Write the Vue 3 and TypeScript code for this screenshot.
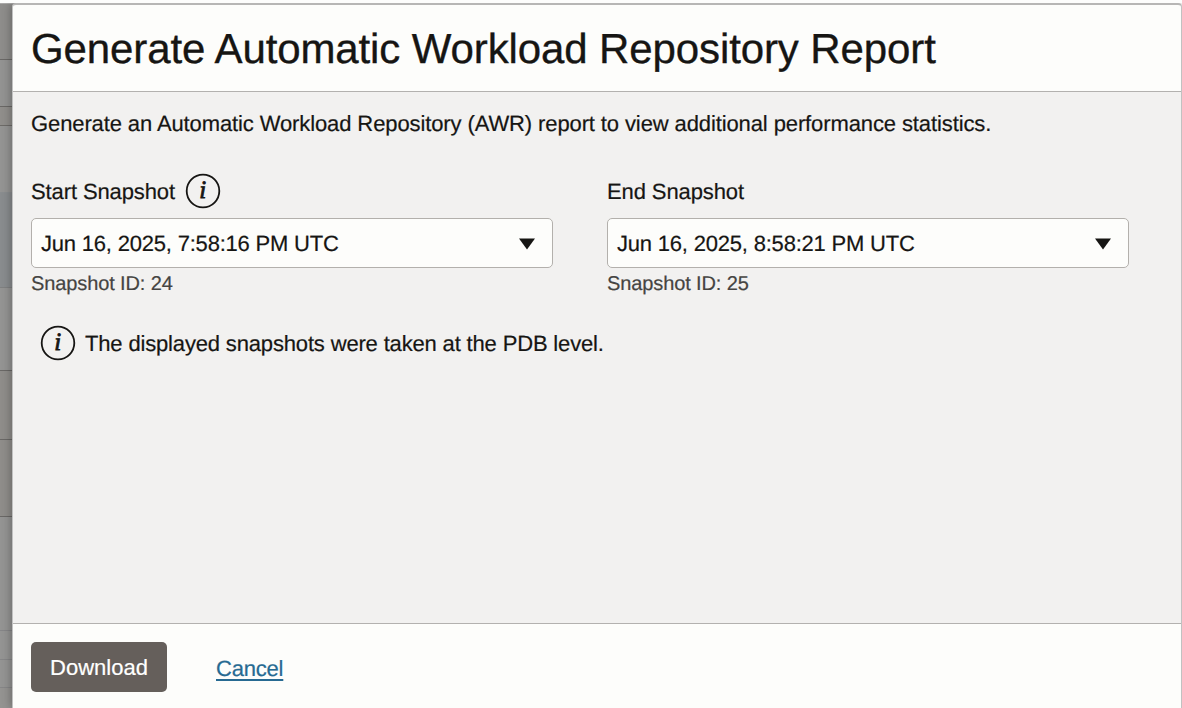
<script setup lang="ts">
interface Snapshot {
  label: string
  value: string
  id: number
  help: boolean
}

interface Band {
  height: number
  color: string
  line: string
}

const snapshots: Snapshot[] = [
  { label: 'Start Snapshot', value: 'Jun 16, 2025, 7:58:16 PM UTC', id: 24, help: true },
  { label: 'End Snapshot', value: 'Jun 16, 2025, 8:58:21 PM UTC', id: 25, help: false },
]

const bands: Band[] = [
  { height: 56, color: '#8e8d8b', line: '#6a6866' },
  { height: 47, color: '#939392', line: '#6a6866' },
  { height: 19, color: '#908e8b', line: '#6d6b68' },
  { height: 67, color: '#949493', line: '#8a8d8f' },
  { height: 95, color: '#898c8e', line: '#7f8081' },
  { height: 83, color: '#949493', line: '#6a6866' },
  { height: 69, color: '#8f8d8a', line: '#6a6866' },
  { height: 77, color: '#8f8d8a', line: '#6a6866' },
  { height: 114, color: '#949493', line: '#858587' },
  { height: 29, color: '#949493', line: '#868687' },
  { height: 28, color: '#949493', line: '#868687' },
  { height: 22, color: '#949391', line: '#949391' },
]
</script>

<template>
  <div class="page">
    <div class="viewport">
      <div class="backdrop">
        <div
          v-for="(band, i) in bands"
          :key="i"
          class="band"
          :style="{ height: band.height + 'px', backgroundColor: band.color, borderBottomColor: band.line }"
        ></div>
      </div>
      <section class="dialog" role="dialog">
        <header class="head">
          <h1>Generate Automatic Workload Repository Report</h1>
        </header>
        <main class="body">
          <p class="intro">Generate an Automatic Workload Repository (AWR) report to view additional performance statistics.</p>
          <div class="fields">
            <div v-for="snap in snapshots" :key="snap.id" class="field">
              <div class="label">
                <span>{{ snap.label }}</span>
                <svg v-if="snap.help" class="info" width="36" height="36" viewBox="0 0 36 36">
                  <circle cx="18" cy="18" r="16.3" />
                  <text x="17.8" y="25" text-anchor="middle">i</text>
                </svg>
              </div>
              <div class="select">
                <span class="value">{{ snap.value }}</span>
                <svg width="16" height="12" viewBox="0 0 16 12"><path d="M0 .5h16L8 11.5z" fill="#161513" /></svg>
              </div>
              <div class="hint">Snapshot ID: {{ snap.id }}</div>
            </div>
          </div>
          <div class="note">
            <svg class="info" width="36" height="36" viewBox="0 0 36 36">
              <circle cx="18" cy="18" r="16.3" />
              <text x="17.8" y="25" text-anchor="middle">i</text>
            </svg>
            <span class="note-text">The displayed snapshots were taken at the PDB level.</span>
          </div>
        </main>
        <footer class="foot">
          <button type="button"><span>Download</span></button>
          <a class="cancel">Cancel</a>
        </footer>
      </section>
    </div>
  </div>
</template>

<style>
body {
  margin: 0;
  overflow: hidden;
}
</style>

<style scoped>
.page {
  width: 1182px;
  height: 708px;
  box-sizing: border-box;
  padding-top: 3px;
  background: #fdfdfc;
  color: #161513;
  font-family: "Liberation Sans", Arial, sans-serif;
  font-size: 22px;
  line-height: 26px;
  letter-spacing: -0.11px;
  white-space: nowrap;
  text-rendering: geometricPrecision;
  -webkit-text-stroke: 0.2px;
}
.viewport {
  height: 705px;
  display: flex;
  overflow: hidden;
}
.backdrop {
  width: 16px;
  margin-right: -4px;
  flex: none;
  border-top: 1px solid #aaa9a8;
}
.band {
  box-sizing: border-box;
  border-bottom: 1px solid;
}
.dialog {
  position: relative;
  width: 1170px;
  height: 705px;
  flex: none;
  box-sizing: border-box;
  border: 1px solid #c1c1c1;
  border-top: 2px solid #b7b6b5;
  border-bottom: 0;
  border-radius: 4px 4px 0 0;
  background: #fdfdfb;
  display: flex;
  flex-direction: column;
  box-shadow: -1px 0 10px rgba(0, 0, 0, 0.3);
}
.head {
  height: 86px;
  flex: none;
  border-bottom: 1px solid #b3b1af;
  padding-left: 18px;
}
h1 {
  margin: 0;
  padding-top: 19px;
  font-size: 42px;
  line-height: 50px;
  font-weight: 400;
  -webkit-text-stroke: 0.35px;
}
.body {
  height: 531px;
  flex: none;
  box-sizing: border-box;
  padding: 19px 18px 0;
  background: #f2f1f0;
}
.intro {
  margin: 0;
}
.fields {
  display: flex;
  gap: 54px;
  margin-top: 36px;
}
.field {
  width: 522px;
}
.label {
  height: 36px;
  display: flex;
  align-items: center;
  gap: 10px;
}
.label span,
.note-text {
  padding-top: 2px;
}
.info circle {
  fill: none;
  stroke: #161513;
  stroke-width: 1.8;
}
.info text {
  font: italic 400 25px "Liberation Serif", "Times New Roman", serif;
  fill: #161513;
  stroke: #161513;
  stroke-width: 0.8px;
  letter-spacing: 0;
}
.select {
  height: 50px;
  margin-top: 9px;
  box-sizing: border-box;
  border: 1px solid #b3b0ac;
  border-radius: 5px;
  background: #fdfdfb;
  display: flex;
  align-items: center;
  justify-content: space-between;
  padding: 2px 17.5px 0 9px;
}
.value {
  letter-spacing: -0.2px;
}
.hint {
  margin-top: 4px;
  font-size: 20px;
  line-height: 24px;
  color: #454442;
}
.note {
  margin-top: 29px;
  padding-left: 9px;
  display: flex;
  align-items: center;
  gap: 9px;
}
.note-text {
  letter-spacing: -0.16px;
}
.foot {
  flex: 1;
  border-top: 1px solid #b3b1af;
  padding: 18px 18px 0;
  display: flex;
  align-items: flex-start;
}
button {
  width: 136px;
  height: 50px;
  padding: 2px 0 0;
  border: 0;
  border-radius: 5px;
  background: #655f5b;
  color: #fff;
  font: inherit;
}
.cancel {
  margin: 14px 0 0 49px;
  color: #276a92;
  letter-spacing: -0.2px;
  text-decoration: underline;
  text-decoration-thickness: 2px;
  text-underline-offset: 3px;
}
</style>
